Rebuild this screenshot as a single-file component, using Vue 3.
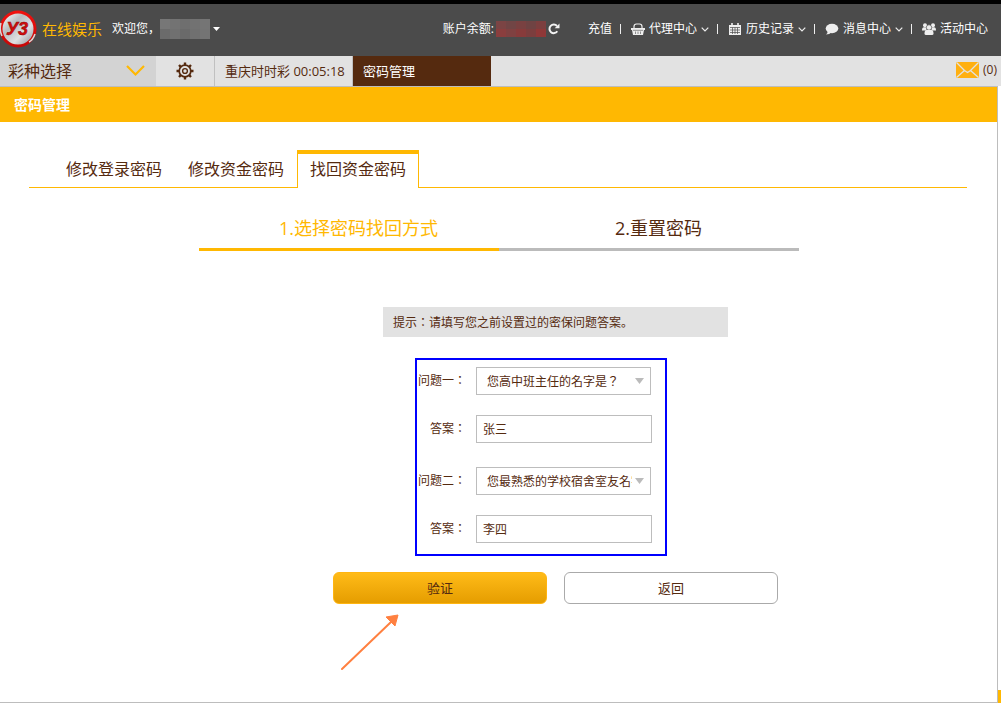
<script setup>
import { ref } from 'vue'

const nameTiles = ['#777', '#737373', '#6f6f6f', '#727272', '#757575', '#6b6b6b', '#707070', '#6a6a6a', '#707070', '#747474']
const balanceTiles = ['#7b4444', '#714545', '#794141', '#6f4343', '#7c3f3f', '#8a3e3e', '#7f4141', '#873b3b', '#7b3e3e', '#8f3838']
const navItems = [
  { label: '代理中心', icon: 'basket', menu: true },
  { label: '历史记录', icon: 'calendar', menu: true },
  { label: '消息中心', icon: 'comment', menu: true },
  { label: '活动中心', icon: 'users', menu: false },
]
const tabs = ['修改登录密码', '修改资金密码', '找回资金密码']
const activeTab = ref(2)
const q1 = ref('您高中班主任的名字是？')
const q2 = ref('您最熟悉的学校宿舍室友名字是？')
const a1 = ref('张三')
const a2 = ref('李四')
</script>

<template>
  <div class="page">
    <header class="topbar">
      <a class="brand" href="#">
        <svg class="logo" viewBox="0 0 38 40" aria-hidden="true">
          <defs>
            <linearGradient id="disc" x1="0" y1="0" x2="1" y2="1">
              <stop offset="0" stop-color="#fff" />
              <stop offset="0.35" stop-color="#b9bcc0" />
              <stop offset="0.65" stop-color="#dfe0e2" />
              <stop offset="1" stop-color="#8d9196" />
            </linearGradient>
            <linearGradient id="ring" x1="0" y1="0" x2="0" y2="1">
              <stop offset="0" stop-color="#f2120f" />
              <stop offset="1" stop-color="#c40808" />
            </linearGradient>
          </defs>
          <circle cx="18" cy="20" r="18.500" fill="url(#ring)" />
          <circle cx="18" cy="20" r="15.500" fill="url(#disc)" />
          <path d="M1 14Q-1 21 2 27" fill="none" stroke="#d8d8d8" stroke-width="1.500" />
          <path d="M35 25Q33 31 29 33" fill="none" stroke="#d8d8d8" stroke-width="1.500" />
          <text x="17" y="26" text-anchor="middle" class="logo-text">У3</text>
        </svg>
        <span class="brand-name">在线娱乐</span>
      </a>
      <span class="welcome">欢迎您，</span>
      <button class="account" type="button" aria-label="账户菜单">
        <span class="tiles"><i v-for="(c, i) in nameTiles" :key="i" :style="{ background: c }"></i></span>
        <svg class="caret" viewBox="0 0 7 4"><path d="M0 0h7L3.500 4z" fill="#fff" /></svg>
      </button>

      <div class="balance">
        <span>账户余额:</span>
        <span class="tiles"><i v-for="(c, i) in balanceTiles" :key="i" :style="{ background: c }"></i></span>
        <button type="button" class="refresh" aria-label="刷新余额">
          <svg viewBox="0 0 12 12"><path d="M9.300 8.300A4.300 4.300 0 1 1 9 3" fill="none" stroke="#f2f2f2" stroke-width="2" /><path d="M11.500 0.500v4.800H6.700z" fill="#f2f2f2" /></svg>
        </button>
      </div>

      <nav class="nav">
        <a href="#">充值</a>
        <template v-for="item in navItems" :key="item.label">
          <span class="bar"></span>
          <a href="#">
            <svg v-if="item.icon === 'basket'" class="ico" viewBox="0 0 14 12">
              <path d="M3 5.500V3.500Q3 1 5.500 1h3Q11 1 11 3.500v2" fill="none" stroke="#eee" stroke-width="1.200" />
              <path d="M0 5h14v2h-1l-1 5H2L1 7H0z" fill="#eee" />
              <path d="M2 7.300h10M4.500 8.500v2.500M7 8.500v2.500M9.500 8.500v2.500" stroke="#4b4b4b" stroke-width="0.600" />
            </svg>
            <svg v-else-if="item.icon === 'calendar'" class="ico" viewBox="0 0 14 12">
              <path d="M1 2h12v10H1z" fill="#eee" />
              <path d="M4 0v3M10 0v3" stroke="#eee" stroke-width="1.600" />
              <path d="M2 4.500h10M2 7h10M2 9.500h10M4.500 4.500V11M7 4.500V11M9.500 4.500V11" stroke="#4b4b4b" stroke-width="0.700" />
            </svg>
            <svg v-else-if="item.icon === 'comment'" class="ico" viewBox="0 0 14 12">
              <ellipse cx="7" cy="5.500" rx="6.300" ry="4.700" fill="#eee" />
              <path d="M2.500 8Q3 10 1 11.500Q4.500 11.500 6.500 9.500z" fill="#eee" />
            </svg>
            <svg v-else class="ico" viewBox="0 0 14 12">
              <circle cx="3" cy="2.300" r="2" fill="#eee" />
              <circle cx="11" cy="2.300" r="2" fill="#eee" />
              <path d="M0 7.500Q0 4.300 2 4.300h2.500v3.200zM14 7.500Q14 4.300 12 4.300H9.500v3.200z" fill="#eee" />
              <circle cx="7" cy="4.500" r="2.700" fill="#eee" stroke="#4b4b4b" stroke-width="0.600" />
              <path d="M2.500 10.500Q2.500 7 4.500 7h5q2 0 2 3.500Q11.500 12 10 12H4Q2.500 12 2.500 10.500z" fill="#eee" />
            </svg>
            <span>{{ item.label }}</span>
            <svg v-if="item.menu" class="chev" viewBox="0 0 8 5"><path d="M0.700 0.700L4 4l3.300-3.300" fill="none" stroke="#eee" stroke-width="1.200" /></svg>
          </a>
        </template>
      </nav>
    </header>

    <div class="toolbar">
      <button type="button" class="lottery">
        <span>彩种选择</span>
        <svg viewBox="0 0 19 12"><path d="M1 1l8.500 8.500L18 1" fill="none" stroke="#ffb802" stroke-width="2.200" /></svg>
      </button>
      <button type="button" class="gear" aria-label="设置">
        <svg viewBox="0 0 18 18" fill="none" stroke="#552a0f">
          <circle cx="9" cy="9" r="5.800" stroke-width="1.700" />
          <circle cx="9" cy="9" r="2.400" stroke-width="1.400" />
          <path d="M9 0.500v2.500M9 15v2.500M0.500 9H3M15 9h2.500M3 3l1.800 1.800M13.200 13.200L15 15M3 15l1.800-1.800M13.200 4.800L15 3" stroke-width="2.400" />
        </svg>
      </button>
      <a class="timer" href="#">重庆时时彩 00:05:18</a>
      <a class="current" href="#">密码管理</a>
      <a class="mail" href="#">
        <svg viewBox="0 0 23 16"><rect width="23" height="16" rx="1" fill="#ffb011" /><path d="M0.500 0.500L8.500 8.500L11.500 10.500L14.500 8.500L22.500 0.500M0.500 15.500L8.500 8.500M22.500 15.500L14.500 8.500" fill="none" stroke="#e2e2e2" stroke-width="1.300" /></svg>
        <span>(0)</span>
      </a>
    </div>

    <main class="panel">
      <h1>密码管理</h1>
      <div class="tabs" role="tablist">
        <button v-for="(t, i) in tabs" :key="t" type="button" role="tab" :aria-selected="activeTab === i" :class="{ active: activeTab === i }" @click="activeTab = i">{{ t }}</button>
      </div>
      <ol class="steps">
        <li class="on">1.选择密码找回方式</li>
        <li>2.重置密码</li>
      </ol>

      <form class="form" @submit.prevent>
        <p class="tip">提示<span class="mid">：</span>请填写您之前设置过的密保问题答案。</p>
        <div class="fields">
          <div class="pair">
            <label for="q1">问题一<span class="mid">：</span></label>
            <span class="pick">
              <select id="q1" v-model="q1"><option>您高中班主任的名字是？</option></select>
              <svg viewBox="0 0 9 6"><path d="M0 0h9L4.500 6z" fill="#bbb" /></svg>
            </span>
            <label for="a1">答案<span class="mid">：</span></label>
            <input id="a1" v-model="a1" type="text" />
          </div>
          <div class="pair">
            <label for="q2">问题二<span class="mid">：</span></label>
            <span class="pick">
              <select id="q2" v-model="q2"><option>您最熟悉的学校宿舍室友名字是？</option></select>
              <svg viewBox="0 0 9 6"><path d="M0 0h9L4.500 6z" fill="#bbb" /></svg>
            </span>
            <label for="a2">答案<span class="mid">：</span></label>
            <input id="a2" v-model="a2" type="text" />
          </div>
        </div>
        <div class="actions">
          <button type="submit" class="primary">验证</button>
          <button type="button">返回</button>
          <svg class="pointer" viewBox="0 0 58 58"><path d="M1 56L50 9" stroke="#ff8040" stroke-width="2" stroke-linecap="round" /><path d="M57 2L45 4L54 13z" fill="#ff8040" stroke="#ff8040" /></svg>
        </div>
      </form>
    </main>
    <span class="corner"></span>
  </div>
</template>

<style>
body {
  margin: 0;
  background: #fff;
}
</style>

<style scoped>
* {
  box-sizing: border-box;
}
.page {
  position: relative;
  display: flex;
  flex-direction: column;
  min-height: 100vh;
  color: #552a0f;
  font-family: "Open Sans", "Noto Sans CJK SC", sans-serif;
  font-size: 12px;
  line-height: 20px;
}
svg {
  display: block;
  flex: none;
}
a {
  color: inherit;
  text-decoration: none;
}
button {
  padding: 0;
  border: 0;
  background: none;
  color: inherit;
  font: inherit;
  cursor: pointer;
}
.mid {
  font-family: "Noto Sans CJK TC", sans-serif;
}
.topbar {
  display: flex;
  align-items: center;
  height: 56px;
  padding: 0 13px 2px 0;
  border-top: 4px solid #000;
  background: #4b4b4b;
  color: #fff;
  white-space: nowrap;
}
.brand {
  display: flex;
  align-items: center;
  gap: 4px;
}
.logo {
  width: 38px;
  height: 40px;
}
.logo-text {
  fill: #d20d0d;
  stroke: #8f0606;
  stroke-width: 0.5px;
  font: italic bold 18px "Liberation Sans", sans-serif;
}
.brand-name {
  color: #ffb802;
  font-size: 15px;
}
.welcome {
  margin-left: 10px;
}
.account {
  display: flex;
  align-items: center;
  gap: 3px;
}
.tiles {
  display: grid;
  grid-template-columns: repeat(5, 10px);
  grid-auto-rows: 10px;
}
.balance .tiles {
  grid-auto-rows: 8px;
}
.caret {
  width: 7px;
  height: 4px;
}
.balance {
  display: flex;
  align-items: center;
  gap: 2px;
  margin-left: auto;
}
.refresh svg {
  width: 12px;
  height: 12px;
}
.nav {
  display: flex;
  align-items: center;
  margin-left: 28px;
}
.nav a {
  display: flex;
  align-items: center;
  gap: 4px;
}
.bar {
  width: 1px;
  height: 10px;
  margin: 0 10px 0 8px;
  background: #eee;
}
.ico {
  width: 14px;
  height: 12px;
}
.chev {
  width: 8px;
  height: 5px;
}
.toolbar {
  display: flex;
  align-items: stretch;
  height: 30px;
  background: #e2e2e2;
  font-size: 13px;
}
.lottery {
  display: flex;
  align-items: center;
  justify-content: space-between;
  width: 156px;
  padding: 0 11px 0 8px;
  background: #d3d3d3;
  font-size: 16px;
}
.lottery svg {
  width: 19px;
  height: 12px;
}
.gear {
  display: grid;
  place-items: center;
  width: 59px;
  border-right: 1px solid #c0c0c0;
}
.gear svg {
  width: 18px;
  height: 18px;
}
.timer {
  display: flex;
  align-items: center;
  width: 138px;
  padding-left: 10px;
  border-right: 1px solid #c0c0c0;
  white-space: nowrap;
}
.current {
  display: flex;
  align-items: center;
  width: 138px;
  padding-left: 10px;
  background: #552a0f;
  color: #fff;
}
.mail {
  display: flex;
  align-items: center;
  gap: 4px;
  margin-left: auto;
  padding: 0 4px 2px 0;
  font-size: 12px;
}
.mail svg {
  width: 23px;
  height: 16px;
}
.panel {
  flex: 1;
  margin-right: 3px;
  border: solid #bdbdbd;
  border-width: 1px 1px 1px 0;
}
h1 {
  margin: 0;
  padding: 0 14px;
  background: #ffb802;
  color: #fff;
  font-size: 14px;
  font-weight: 700;
  line-height: 35px;
}
.tabs {
  display: flex;
  height: 38px;
  margin: 28px 30px 0 29px;
  padding-left: 24px;
  border-bottom: 1px solid #ffb802;
}
.tabs button {
  width: 122px;
  height: 38px;
  padding-bottom: 4px;
  border: 1px solid transparent;
  border-width: 4px 1px 0;
  font-size: 16px;
}
.tabs .active {
  border-color: #ffb802;
  background: #fff;
}
.steps {
  display: flex;
  max-width: 600px;
  margin: 20px auto 0;
  padding: 0;
  list-style: none;
  font-size: 18px;
  line-height: 40px;
}
.steps li {
  flex: 1;
  padding-left: 20px;
  border-bottom: 3px solid #bbb;
  text-align: center;
}
.steps .on {
  border-color: #ffb802;
  color: #ffb802;
}
.form {
  display: flex;
  flex-direction: column;
  align-items: center;
  padding: 56px 0 32px 114px;
}
.tip {
  width: 345px;
  height: 30px;
  margin: 0;
  padding: 0 10px;
  background: #e2e2e2;
  line-height: 30px;
}
.fields {
  display: grid;
  gap: 24px;
  width: 252px;
  margin: 21px 29px 0 0;
  padding: 7px 13px 11px 0;
  border: 2px solid #00f;
}
.pair {
  display: grid;
  grid-template-columns: 1fr 176px;
  gap: 20px 10px;
}
label {
  height: 26px;
  line-height: 26px;
  text-align: right;
  white-space: nowrap;
}
.pick {
  display: grid;
  align-items: center;
  width: 175px;
}
.pick select,
.pick svg {
  grid-area: 1 / 1;
}
.pick svg {
  width: 9px;
  height: 6px;
  margin-right: 7px;
  justify-self: end;
  pointer-events: none;
}
select,
input {
  width: 100%;
  height: 28px;
  margin: 0;
  border: 1px solid #bdbdbd;
  border-radius: 0;
  background: #fff;
  color: inherit;
  font: inherit;
  appearance: none;
}
select {
  padding: 0 18px 0 10px;
  font-family: "Noto Sans CJK TC", sans-serif;
}
input {
  padding: 0 6px;
}
.actions {
  position: relative;
  display: flex;
  gap: 17px;
  margin-top: 16px;
}
.actions button {
  width: 214px;
  height: 32px;
  border: 1px solid #aaa;
  border-radius: 6px;
  font-size: 13px;
}
.actions .primary {
  border-color: #ffb511;
  background: linear-gradient(#ffbb18, #e59d00);
}
.pointer {
  position: absolute;
  top: 41px;
  left: 8px;
  width: 58px;
  height: 58px;
}
.corner {
  position: absolute;
  right: 0;
  bottom: 0;
  width: 3px;
  height: 13px;
  background: #ffb802;
}
</style>
